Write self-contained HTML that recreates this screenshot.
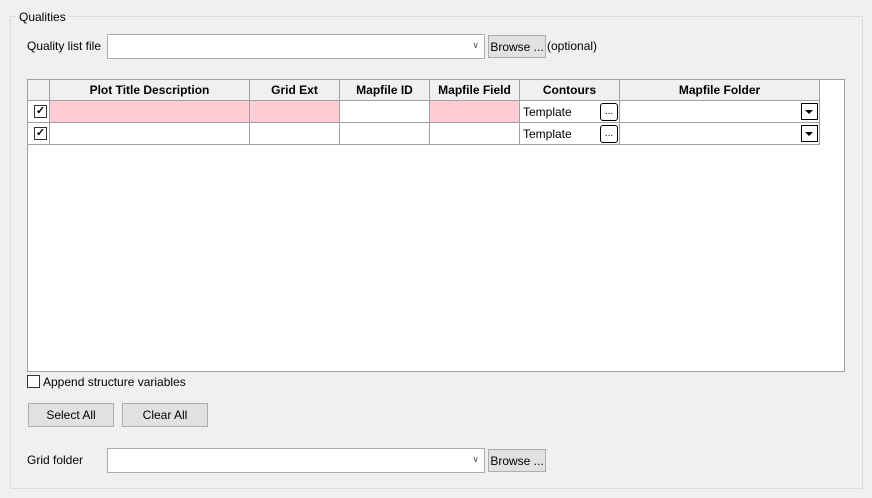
<!DOCTYPE html>
<html><head><style>
body{margin:0;width:872px;height:498px;background:#f0f0f0;font-family:"Liberation Sans",sans-serif;font-size:12px;color:#000;position:relative;overflow:hidden}
.a{position:absolute}
.box{border:1px solid #dcdcdc}
.in{background:#fff;border:1px solid #adadad;box-sizing:border-box}
.btn{background:#e1e1e1;border:1px solid #adadad;box-sizing:border-box;text-align:center}
.c{position:absolute;box-sizing:border-box;border-right:1px solid #a0a0a0;border-bottom:1px solid #a0a0a0}
.h{background:#f0f0f0;font-weight:bold;text-align:center;line-height:21px}
.pk{background:#ffccd5}
.cb{position:absolute;width:13px;height:13px;border:1px solid #333;background:#fff;box-sizing:border-box;font-size:11px;line-height:11px;text-align:center;font-weight:bold}
.dd{position:absolute;width:17px;height:17px;border:1px solid #000;box-sizing:border-box;background:#fff}
.dd:after{content:"";position:absolute;left:3px;top:6px;border-left:4px solid transparent;border-right:4px solid transparent;border-top:4px solid #000}
.el{position:absolute;width:18px;height:18px;border:1px solid #000;border-radius:3px;box-sizing:border-box;background:#fff;font-size:10px;text-align:center;line-height:16px}
</style></head><body>
<div class="a box" style="left:10px;top:16px;width:851px;height:471px"></div>
<div class="a" style="left:16px;top:10px;background:#f0f0f0;padding:0 3px">Qualities</div>
<div class="a" style="left:27px;top:39px">Quality list file</div>
<div class="a in" style="left:107px;top:34px;width:378px;height:25px"><span class="a" style="right:5px;top:5px;font-size:9px;color:#555">&#x2228;</span></div>
<div class="a btn" style="left:488px;top:35px;width:58px;height:23px;line-height:22px">Browse ...</div>
<div class="a" style="left:547px;top:39px">(optional)</div>

<div class="a" style="left:27px;top:79px;width:818px;height:293px;background:#fff;border:1px solid #a0a0a0;box-sizing:border-box"></div>
<div class="c h" style="left:28px;top:80px;width:22px;height:21px"></div>
<div class="c h" style="left:50px;top:80px;width:200px;height:21px">Plot Title Description</div>
<div class="c h" style="left:250px;top:80px;width:90px;height:21px">Grid Ext</div>
<div class="c h" style="left:340px;top:80px;width:90px;height:21px">Mapfile ID</div>
<div class="c h" style="left:430px;top:80px;width:90px;height:21px">Mapfile Field</div>
<div class="c h" style="left:520px;top:80px;width:100px;height:21px">Contours</div>
<div class="c h" style="left:620px;top:80px;width:200px;height:21px">Mapfile Folder</div>

<div class="c" style="left:28px;top:101px;width:22px;height:22px"></div>
<div class="c pk" style="left:50px;top:101px;width:200px;height:22px"></div>
<div class="c pk" style="left:250px;top:101px;width:90px;height:22px"></div>
<div class="c" style="left:340px;top:101px;width:90px;height:22px"></div>
<div class="c pk" style="left:430px;top:101px;width:90px;height:22px"></div>
<div class="c" style="left:520px;top:101px;width:100px;height:22px;padding:4px 0 0 3px">Template</div>
<div class="c" style="left:620px;top:101px;width:200px;height:22px"></div>
<div class="cb" style="left:34px;top:105px">&#x2713;</div>
<div class="el" style="left:600px;top:103px">...</div>
<div class="dd" style="left:801px;top:103px"></div>

<div class="c" style="left:28px;top:123px;width:22px;height:22px"></div>
<div class="c" style="left:50px;top:123px;width:200px;height:22px"></div>
<div class="c" style="left:250px;top:123px;width:90px;height:22px"></div>
<div class="c" style="left:340px;top:123px;width:90px;height:22px"></div>
<div class="c" style="left:430px;top:123px;width:90px;height:22px"></div>
<div class="c" style="left:520px;top:123px;width:100px;height:22px;padding:4px 0 0 3px">Template</div>
<div class="c" style="left:620px;top:123px;width:200px;height:22px"></div>
<div class="cb" style="left:34px;top:127px">&#x2713;</div>
<div class="el" style="left:600px;top:125px">...</div>
<div class="dd" style="left:801px;top:125px"></div>

<div class="cb" style="left:27px;top:375px;border-color:#333"></div>
<div class="a" style="left:43px;top:375px">Append structure variables</div>
<div class="a btn" style="left:28px;top:403px;width:86px;height:24px;line-height:23px">Select All</div>
<div class="a btn" style="left:122px;top:403px;width:86px;height:24px;line-height:23px">Clear All</div>
<div class="a" style="left:27px;top:453px">Grid folder</div>
<div class="a in" style="left:107px;top:448px;width:378px;height:25px"><span class="a" style="right:5px;top:5px;font-size:9px;color:#555">&#x2228;</span></div>
<div class="a btn" style="left:488px;top:449px;width:58px;height:23px;line-height:22px">Browse ...</div>
</body></html>
